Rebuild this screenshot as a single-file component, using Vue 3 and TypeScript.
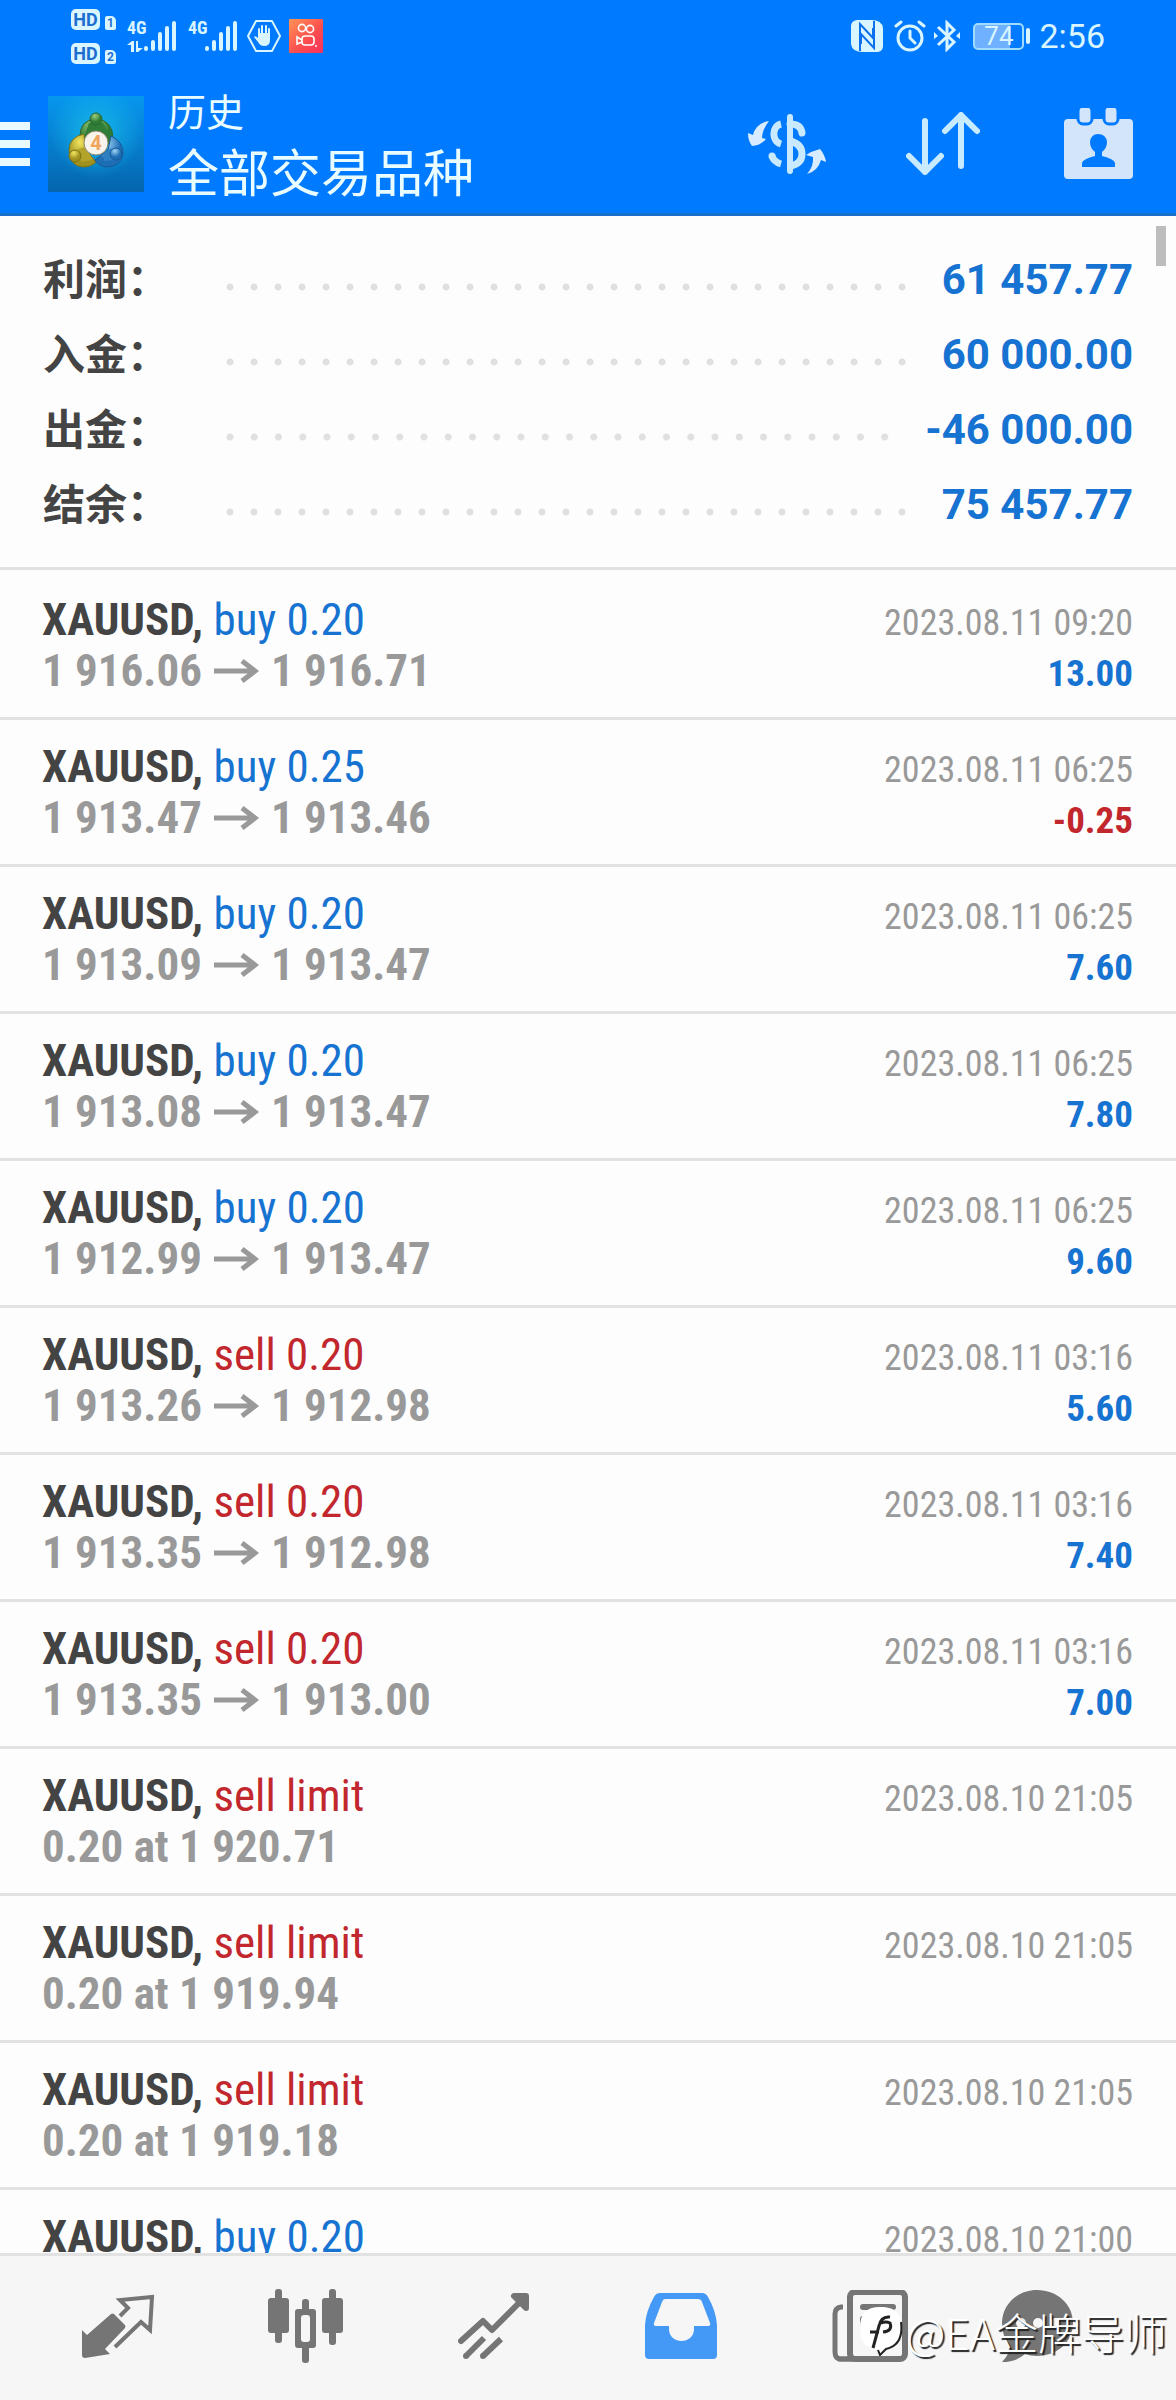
<script setup lang="ts">
interface Total {
  label: string
  value: string
}

interface Deal {
  side: 'buy' | 'sell'
  action: string
  open: string
  close?: string
  time: string
  profit?: string
}

const totals: Total[] = [
  { label: '利润', value: '61 457.77' },
  { label: '入金', value: '60 000.00' },
  { label: '出金', value: '-46 000.00' },
  { label: '结余', value: '75 457.77' },
]

const deals: Deal[] = [
  { side: 'buy', action: 'buy 0.20', open: '1 916.06', close: '1 916.71', time: '2023.08.11 09:20', profit: '13.00' },
  { side: 'buy', action: 'buy 0.25', open: '1 913.47', close: '1 913.46', time: '2023.08.11 06:25', profit: '-0.25' },
  { side: 'buy', action: 'buy 0.20', open: '1 913.09', close: '1 913.47', time: '2023.08.11 06:25', profit: '7.60' },
  { side: 'buy', action: 'buy 0.20', open: '1 913.08', close: '1 913.47', time: '2023.08.11 06:25', profit: '7.80' },
  { side: 'buy', action: 'buy 0.20', open: '1 912.99', close: '1 913.47', time: '2023.08.11 06:25', profit: '9.60' },
  { side: 'sell', action: 'sell 0.20', open: '1 913.26', close: '1 912.98', time: '2023.08.11 03:16', profit: '5.60' },
  { side: 'sell', action: 'sell 0.20', open: '1 913.35', close: '1 912.98', time: '2023.08.11 03:16', profit: '7.40' },
  { side: 'sell', action: 'sell 0.20', open: '1 913.35', close: '1 913.00', time: '2023.08.11 03:16', profit: '7.00' },
  { side: 'sell', action: 'sell limit', open: '0.20 at 1 920.71', time: '2023.08.10 21:05' },
  { side: 'sell', action: 'sell limit', open: '0.20 at 1 919.94', time: '2023.08.10 21:05' },
  { side: 'sell', action: 'sell limit', open: '0.20 at 1 919.18', time: '2023.08.10 21:05' },
  { side: 'buy', action: 'buy 0.20', open: '', time: '2023.08.10 21:00' },
]
</script>

<template>
  <div class="app">
    <header class="top">
      <div class="status">
        <div class="hd">
          <div class="hd-row"><b class="hd-badge">HD</b><b class="hd-sim">1</b></div>
          <div class="hd-row"><b class="hd-badge">HD</b><b class="hd-sim">2</b></div>
        </div>
        <div class="signal">
          <div class="net">
            <span>4G</span>
            <svg width="17" height="11" viewBox="0 0 17 11"><path d="M0 4l5-4h2v11H4V4zM9 0h2v7h5l-5 4H9z" fill="#d9f5ff" /></svg>
          </div>
          <svg width="33" height="32" viewBox="0 0 33 32" stroke="#d9f5ff" stroke-width="4" stroke-linecap="round"><path d="M2 28v1M9 22v7M16 14v15M23 8v21M30 3v26" /></svg>
        </div>
        <div class="signal">
          <div class="net"><span>4G</span></div>
          <svg width="33" height="32" viewBox="0 0 33 32" stroke="#d9f5ff" stroke-width="4" stroke-linecap="round"><path d="M2 28v1M9 22v7M16 14v15M23 8v21M30 3v26" /></svg>
        </div>
        <svg class="hex" width="34" height="32" viewBox="0 0 34 32">
          <path d="M9 1h16l8 15-8 15H9L1 16z" fill="none" stroke="#d9f5ff" stroke-width="2" stroke-linejoin="round" />
          <path d="M12 15V9M15 15V6M19 15V6M22 15V9" stroke="#d9f5ff" stroke-width="2" stroke-linecap="round" />
          <path d="M11 13h12v7q0 6-6 6-4 0-6-4l-4-5q1-2 4 1z" fill="#d9f5ff" />
        </svg>
        <svg width="34" height="34" viewBox="0 0 34 34">
          <defs>
            <linearGradient id="kuai" x1="0" y1="0" x2="1" y2="1"><stop offset="0" stop-color="#ff9455" /><stop offset="0.6" stop-color="#fb4b4e" /><stop offset="1" stop-color="#f8305f" /></linearGradient>
          </defs>
          <rect width="34" height="34" rx="1" fill="url(#kuai)" />
          <g fill="none" stroke="#fff" stroke-width="1.6"><circle cx="13" cy="9" r="3.6" /><circle cx="21" cy="10" r="3.6" /><rect x="13" y="17" width="12" height="9" rx="3" /><path d="M13 21l-5-3v7l5-2" /></g>
          <circle cx="27" cy="27" r="1" fill="#fff" />
        </svg>
        <div class="grow"></div>
        <svg width="32" height="32" viewBox="0 0 32 32">
          <path d="M6 0h14q11 0 12 8v18q0 5-5 6H12Q1 32 0 24V6q0-5 6-6z" fill="#d9f5ff" />
          <g fill="none" stroke="#0a70ee" stroke-width="2"><path d="M9 31V4l13 14V8M23 1v27L10 14v10" /></g>
        </svg>
        <svg class="alarm" width="32" height="32" viewBox="0 0 32 32" fill="none" stroke="#d9f5ff" stroke-width="3" stroke-linecap="round">
          <circle cx="16" cy="18" r="12" /><path d="M16 11v7l5 5M2 6l5-4M30 6l-5-4" />
        </svg>
        <svg width="26" height="32" viewBox="0 0 26 32" fill="none" stroke="#d9f5ff" stroke-width="3">
          <path d="M4 7l16 15-7 7V3l7 7L4 25" /><path d="M0 12v7l4-3zM26 12v7l-4-3z" fill="#d9f5ff" stroke="none" />
        </svg>
        <div class="battery"><span>74</span></div>
        <div class="nub"></div>
        <span class="clock">2:56</span>
      </div>

      <div class="toolbar">
        <button class="tool" type="button" aria-label="菜单">
          <svg width="30" height="44" viewBox="0 0 30 44" fill="#e9faff"><path d="M0 0h30v8H0zM0 18h30v8H0zM0 36h30v8H0z" /></svg>
        </button>
        <svg class="logo" width="96" height="96" viewBox="0 0 96 96">
          <defs>
            <linearGradient id="sky" x1="0" y1="0" x2="0" y2="1"><stop offset="0" stop-color="#0797ef" /><stop offset="1" stop-color="#0565ad" /></linearGradient>
            <radialGradient id="glow"><stop offset="0" stop-color="#16b7e8" /><stop offset="1" stop-color="#16b7e8" stop-opacity="0" /></radialGradient>
            <radialGradient id="green" cx=".4" cy=".25"><stop offset="0" stop-color="#9fce7c" /><stop offset="1" stop-color="#2d7b35" /></radialGradient>
            <radialGradient id="gold" cx=".4" cy=".25"><stop offset="0" stop-color="#f0e560" /><stop offset="1" stop-color="#a0901e" /></radialGradient>
            <radialGradient id="blue" cx=".4" cy=".25"><stop offset="0" stop-color="#9fd4f7" /><stop offset="1" stop-color="#1d6eb4" /></radialGradient>
          </defs>
          <rect width="96" height="96" fill="url(#sky)" />
          <circle cx="48" cy="36" r="46" fill="url(#glow)" />
          <path d="M32 42Q31 24 48 23q17 1 17 20l-8 8H38z" fill="url(#green)" stroke="#2a6930" />
          <path d="M36 38q-15 3-15 17 1 15 14 16 8 0 13-5L37 53z" fill="url(#gold)" stroke="#7c7216" />
          <path d="M63 40q13 6 12 18-2 12-15 13-9 0-13-7l13-10z" fill="url(#blue)" stroke="#175a96" />
          <path d="M41 27l7-1 7 1 7 14-14-6-12 6z" fill="#2f7d36" />
          <path d="M30 53l8-2 7 13-12 2z" fill="#b3a32a" />
          <path d="M56 58l7-6 4 12-11 1z" fill="#2d7fc2" />
          <circle cx="48" cy="23" r="6" fill="url(#green)" stroke="#2a6930" /><circle cx="27" cy="60" r="6" fill="url(#gold)" stroke="#7c7216" /><circle cx="68" cy="58" r="6" fill="url(#blue)" stroke="#175a96" />
          <circle cx="48" cy="47" r="12" fill="#f8f3ec" stroke="#8f8a6c" />
          <text x="48" y="54" text-anchor="middle" font-family="Roboto, sans-serif" font-weight="700" font-size="20" fill="#f0a45c">4</text>
        </svg>
        <div class="titles">
          <div class="title">历史</div>
          <h1 class="symbol">全部交易品种</h1>
        </div>
        <button class="tool money" type="button" aria-label="货币">
          <svg width="78" height="60" viewBox="747 112 78 60">
            <g fill="none" stroke="#c9e9ff" stroke-width="7">
              <path d="M789 115v54" stroke-linecap="round" stroke-width="6" />
              <path d="M789 122q11 0 12 9" stroke-linecap="round" /><path d="M789 139q12 3 12 13t-12 12" />
              <path d="M780 122c-9 2-10 17 0 20" /><path d="M771 154q2 6 9 8" />
            </g>
            <circle cx="771" cy="154" r="3.5" fill="#c9e9ff" />
            <path d="M768 119q-13 2-16 14l-5-2q0 8 4 13 8 0 14-7l-4-1q0-8 7-17z" fill="#d9ecff" />
            <path d="M805 153q6-4 14-6 5 6 6 13l-5-2q-3 11-14 14 7-8 6-17z" fill="#d9ecff" />
          </svg>
        </button>
        <button class="tool sort" type="button" aria-label="排序">
          <svg width="74" height="64" viewBox="905 112 74 64" fill="none" stroke="#c9ebff" stroke-width="6" stroke-linecap="round" stroke-linejoin="round">
            <path d="M924 121v51M908 156l16 16 16-16M960 166v-51M944 131l16-16 16 16" />
          </svg>
        </button>
        <button class="tool" type="button" aria-label="日期">
          <svg width="70" height="72" viewBox="1064 107 70 72">
            <rect x="1064" y="118" width="69" height="60" rx="4" fill="#d3e5fb" />
            <g fill="#d3e5fb" stroke="#007aff" stroke-width="3"><rect x="1078" y="105" width="14" height="18" rx="5" /><rect x="1104" y="105" width="14" height="18" rx="5" /></g>
            <path d="M1082 166v-4q1-4 13-7v-4q-5-4-5-10 1-8 8-8 8 0 9 8 0 6-5 10v4q12 3 13 7v4z" fill="#007aff" />
          </svg>
        </button>
      </div>
    </header>

    <main class="content">
      <div class="scroll-thumb"></div>
      <dl class="totals">
        <div v-for="t in totals" :key="t.label" class="total">
          <dt>{{ t.label }}：</dt>
          <span class="dots"></span>
          <dd>{{ t.value }}</dd>
        </div>
      </dl>
      <ul class="deals">
        <li v-for="(d, i) in deals" :key="i" class="deal">
          <div class="line">
            <span class="name"><b>XAUUSD,</b> <span :class="d.side">{{ d.action }}</span></span>
            <time class="time">{{ d.time }}</time>
          </div>
          <div class="line">
            <span class="price">
              <span>{{ d.open }}</span>
              <svg v-if="d.close" width="45" height="24" viewBox="0 0 45 24" fill="none" stroke="#999" stroke-width="5"><path d="M0 12h41M28 2l13 10-13 10" /></svg>
              <span v-if="d.close">{{ d.close }}</span>
            </span>
            <span v-if="d.profit" class="profit" :class="d.profit.startsWith('-') ? 'sell' : 'buy'">{{ d.profit }}</span>
          </div>
        </li>
      </ul>
    </main>

    <nav class="tabs">
      <button class="tab" type="button" aria-label="行情">
        <svg width="74" height="74" viewBox="81 2288 74 74">
          <path d="M82 2329l5 5 24-21q2-1 3 0l11 11q1 2 0 3l-20 21 5 5-25 4q-3 0-3-3z" fill="#757575" />
          <path d="M120 2315l8-8-8-8 32-3-2 33-9-8-26 25" fill="none" stroke="#757575" stroke-width="4" />
        </svg>
      </button>
      <button class="tab" type="button" aria-label="图表">
        <svg width="76" height="74" viewBox="268 2289 76 74" fill="#757575">
          <rect x="268" y="2298" width="21" height="35" rx="3" /><rect x="275" y="2289" width="7" height="54" rx="3" />
          <rect x="322" y="2298" width="21" height="35" rx="3" /><rect x="329" y="2289" width="7" height="56" rx="3" />
          <rect x="302" y="2299" width="7" height="64" rx="3" /><rect x="295" y="2309" width="21" height="39" rx="3" />
          <rect x="301" y="2315" width="9" height="27" rx="3" fill="#f6f6f6" />
        </svg>
      </button>
      <button class="tab" type="button" aria-label="交易">
        <svg width="72" height="68" viewBox="458 2291 72 68" fill="none" stroke="#757575" stroke-width="6" stroke-linecap="round" stroke-linejoin="round">
          <path d="M461 2340l22-20 9 9 32-32" /><path d="M514 2295h12v12z" fill="#757575" /><path d="M466 2355l18-18M483 2355l18-17" stroke-linecap="butt" /><path d="M466 2355h0M483 2355h0" />
        </svg>
      </button>
      <button class="tab" type="button" aria-label="历史" aria-current="page">
        <svg width="74" height="68" viewBox="646 2291 74 68">
          <path d="M661 2292h42q4 0 6 4 8 14 9 28v30q0 4-4 4h-64q-4 0-4-4v-30q1-14 9-28 2-4 6-4z" fill="#4399f5" />
          <path d="M666 2298h33q3 0 4 3l8 21q1 3-2 3h-14v3c0 16-25 16-25 0v-3h-13q-3 0-2-3l8-21q1-3 3-3z" fill="#f6f6f6" />
        </svg>
      </button>
      <button class="tab" type="button" aria-label="新闻">
        <svg width="76" height="72" viewBox="834 2289 76 72">
          <path d="M845 2306h-2q-6 1-6 7v38q0 7 6 7h12" fill="none" stroke="#757575" stroke-width="5" />
          <rect x="852" y="2291" width="55" height="67" rx="5" fill="none" stroke="#757575" stroke-width="6" />
          <path d="M840 2358h16" stroke="#757575" stroke-width="5" /><path d="M865 2306h30" stroke="#757575" stroke-width="6" stroke-linecap="round" /><rect x="862" y="2315" width="36" height="14" rx="3" fill="#757575" />
        </svg>
      </button>
      <button class="tab" type="button" aria-label="消息">
        <svg width="72" height="72" viewBox="1002 2289 72 72">
          <path d="M1037 2289c20 0 36 14 36 33s-16 33-36 33q-7 0-12-2-9 8-23 8 7-7 8-16-8-9-8-23c0-19 16-33 35-33z" fill="#757575" />
          <g fill="#f6f6f6"><circle cx="1021" cy="2322" r="5" /><circle cx="1038" cy="2322" r="5" /><circle cx="1055" cy="2322" r="5" /></g>
        </svg>
      </button>
      <div class="watermark">
        <svg width="44" height="50" viewBox="0 0 44 50">
          <path d="M21 1c16 0 22 7 22 22 0 12-5 18-16 20l-5 6-3-6C7 42 1 37 1 22 1 8 7 1 21 1z" fill="#fff" />
          <path d="M42 16q3 23-15 27l-6 6-2-5" fill="none" stroke="#222" stroke-width="2" />
          <path d="M11 26h9M14 42l6-22q2-10 11-9M22 17q5-2 9 0 3 8-7 9" fill="none" stroke="#222" stroke-width="3" />
        </svg>
        <span>@EA金牌导师</span>
      </div>
    </nav>
  </div>
</template>

<style>
body {
  margin: 0;
  background: #fdfdfd;
}
</style>

<style scoped>
.app {
  display: flex;
  flex-direction: column;
  height: 100vh;
  overflow: hidden;
  background: #fdfdfd;
  font-family: "Roboto Condensed", Roboto, "Noto Sans CJK SC", sans-serif;
}

button {
  padding: 0;
  border: 0;
  background: none;
}

svg {
  display: block;
  flex: none;
}

.top {
  flex: none;
  background: #007aff;
  border-bottom: 3px solid #1a6fcb;
}

.status {
  display: flex;
  align-items: center;
  height: 72px;
  padding: 0 71px;
  color: #d9f5ff;
}

.hd {
  display: flex;
  flex-direction: column;
  gap: 13px;
  width: 56px;
}

.hd-row {
  display: flex;
  align-items: flex-end;
  gap: 5px;
}

.hd-badge {
  width: 29px;
  border-radius: 5px;
  background: #d9f5ff;
  color: #1c6fd0;
  font: 700 18px/21px Roboto, sans-serif;
  text-align: center;
}

.hd-sim {
  width: 11px;
  border-radius: 2px 5px 2px 2px;
  background: #d9f5ff;
  color: #1c6fd0;
  font: 700 12px/14px Roboto, sans-serif;
  text-align: center;
}

.signal {
  display: flex;
  width: 61px;
}

.net {
  width: 17px;
  font-weight: 700;
  font-size: 18px;
  line-height: 16px;
}

.net svg {
  margin-top: 5px;
}

.hex {
  margin: 0 8px 0 -2px;
}

.grow {
  flex: 1;
}

.alarm {
  margin: 0 8px 0 11px;
}

.battery {
  width: 47px;
  height: 23px;
  margin-left: 13px;
  border: 2px solid #9fdcff;
  border-radius: 5px;
  background: linear-gradient(90deg, #6fb1ff 74%, transparent 74%);
  font: 400 26px/23px Roboto, sans-serif;
  text-align: center;
}

.nub {
  width: 4px;
  height: 16px;
  margin: 0 9px 0 2px;
  border-radius: 2px;
  background: #d9f5ff;
}

.clock {
  font: 400 34px/40px Roboto, sans-serif;
}

.toolbar {
  display: flex;
  align-items: center;
  height: 141px;
  padding: 2px 42px 0 0;
  box-sizing: border-box;
}

.logo {
  margin: 0 24px 0 18px;
}

.titles {
  flex: 1;
  color: #e9fcff;
  font-family: "Noto Sans CJK SC", sans-serif;
}

.title {
  font-size: 38px;
  line-height: 52px;
}

.symbol {
  margin: 0;
  font-size: 51px;
  font-weight: 400;
  line-height: 68px;
}

.money {
  margin-right: 80px;
}

.sort {
  margin-right: 84px;
}

.content {
  position: relative;
  flex: 1;
  min-height: 0;
  overflow: hidden;
}

.scroll-thumb {
  position: absolute;
  top: 10px;
  right: 10px;
  width: 10px;
  height: 40px;
  background: #bdbdbd;
}

.totals {
  margin: 0;
  padding: 25px 43px 26px;
  border-bottom: 3px solid #e2e2e2;
}

.total {
  display: flex;
  align-items: center;
  height: 75px;
}

dt {
  width: 175px;
  padding-bottom: 4px;
  color: #444;
  font: 700 42px/54px "Noto Sans CJK SC", sans-serif;
}

.dots {
  flex: 1;
  height: 10px;
  margin: 16px 28px 0 0;
  background-image: radial-gradient(circle at 12px 5px, #e0e0e0 3px, transparent 4px);
  background-repeat: space no-repeat;
  background-size: 24px 10px;
}

dd {
  margin: 0;
  padding-top: 2px;
  color: #1673d1;
  font: 700 42px/50px Roboto, sans-serif;
}

.deals {
  margin: 0;
  padding: 3px 0 0;
  list-style: none;
}

.deal {
  padding: 21px 43px 21px 42px;
  border-bottom: 3px solid #e2e2e2;
}

.line {
  display: flex;
  align-items: baseline;
  justify-content: space-between;
  height: 51px;
  line-height: 51px;
}

.name {
  color: #444;
  font-size: 45px;
}

.buy {
  color: #1673d1;
}

.sell {
  color: #c1272d;
}

.time {
  color: #999;
  font-size: 36px;
}

.price {
  display: flex;
  align-items: center;
  gap: 12px;
  color: #999;
  font-size: 45px;
  font-weight: 700;
}

.profit {
  font-size: 37px;
  font-weight: 700;
}

.tabs {
  position: relative;
  display: grid;
  flex: none;
  grid-template-columns: repeat(5, 188fr) 148fr;
  height: 139px;
  padding: 0 64px 5px 24px;
  border-top: 3px solid #e2e2e2;
  background: #f6f6f6;
}

.tab {
  display: flex;
  align-items: center;
  justify-content: center;
}

.watermark {
  position: absolute;
  right: 9px;
  bottom: 39px;
  display: flex;
  align-items: center;
  gap: 3px;
  color: #fff;
  font: 300 43px/60px "Noto Sans CJK SC", sans-serif;
  text-shadow: 2px 2px 1px #222;
}
</style>
